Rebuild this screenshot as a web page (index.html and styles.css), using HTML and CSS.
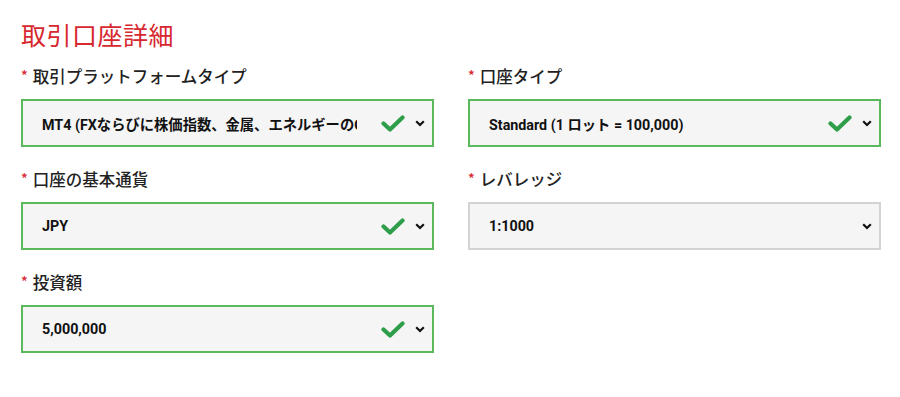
FILE: index.html
```html
<!DOCTYPE html>
<html lang="ja">
<head>
<meta charset="utf-8">
<link rel="stylesheet" href="styles.css">
</head>
<body>
<div class="page">
  <h1 class="title">取引口座詳細</h1>
  <div class="grid">
    <div class="field">
      <div class="label"><span class="req">*</span>取引プラットフォームタイプ</div>
      <div class="select valid">
        <span class="value">MT4 (FXならびに株価指数、金属、エネルギーのCFD)</span>
        <svg class="check" width="24" height="17" viewBox="0 0 24 17"><path d="M2.5 8.5 L9 14.5 L21.5 2.5" fill="none" stroke="#2e9e4a" stroke-width="4.2" stroke-linecap="round" stroke-linejoin="round"/></svg>
        <svg class="chev" width="10" height="7" viewBox="0 0 10 7"><polyline points="1.2,1.2 5,5 8.8,1.2" fill="none" stroke="#111" stroke-width="2.2"/></svg>
      </div>
    </div>
    <div class="field">
      <div class="label"><span class="req">*</span>口座タイプ</div>
      <div class="select valid">
        <span class="value">Standard (1 ロット = 100,000)</span>
        <svg class="check" width="24" height="17" viewBox="0 0 24 17"><path d="M2.5 8.5 L9 14.5 L21.5 2.5" fill="none" stroke="#2e9e4a" stroke-width="4.2" stroke-linecap="round" stroke-linejoin="round"/></svg>
        <svg class="chev" width="10" height="7" viewBox="0 0 10 7"><polyline points="1.2,1.2 5,5 8.8,1.2" fill="none" stroke="#111" stroke-width="2.2"/></svg>
      </div>
    </div>
    <div class="field">
      <div class="label"><span class="req">*</span>口座の基本通貨</div>
      <div class="select valid">
        <span class="value">JPY</span>
        <svg class="check" width="24" height="17" viewBox="0 0 24 17"><path d="M2.5 8.5 L9 14.5 L21.5 2.5" fill="none" stroke="#2e9e4a" stroke-width="4.2" stroke-linecap="round" stroke-linejoin="round"/></svg>
        <svg class="chev" width="10" height="7" viewBox="0 0 10 7"><polyline points="1.2,1.2 5,5 8.8,1.2" fill="none" stroke="#111" stroke-width="2.2"/></svg>
      </div>
    </div>
    <div class="field">
      <div class="label"><span class="req">*</span>レバレッジ</div>
      <div class="select">
        <span class="value">1:1000</span>
        <svg class="chev" width="10" height="7" viewBox="0 0 10 7"><polyline points="1.2,1.2 5,5 8.8,1.2" fill="none" stroke="#111" stroke-width="2.2"/></svg>
      </div>
    </div>
    <div class="field">
      <div class="label"><span class="req">*</span>投資額</div>
      <div class="select valid">
        <span class="value">5,000,000</span>
        <svg class="check" width="24" height="17" viewBox="0 0 24 17"><path d="M2.5 8.5 L9 14.5 L21.5 2.5" fill="none" stroke="#2e9e4a" stroke-width="4.2" stroke-linecap="round" stroke-linejoin="round"/></svg>
        <svg class="chev" width="10" height="7" viewBox="0 0 10 7"><polyline points="1.2,1.2 5,5 8.8,1.2" fill="none" stroke="#111" stroke-width="2.2"/></svg>
      </div>
    </div>
  </div>
</div>
</body>
</html>
```
FILE: styles.css
```css
html, body {
  margin: 0;
  padding: 0;
  background: #fff;
}
body {
  font-family: Roboto, "Noto Sans CJK JP", "Liberation Sans", sans-serif;
  color: #1a1a1a;
}
.page {
  padding: 18px 20px 0 21px;
}
.title {
  margin: 0;
  font-family: "Noto Sans CJK JP", sans-serif;
  font-weight: 400;
  font-size: 25px;
  line-height: 32px;
  color: #d7282f;
  letter-spacing: 0.5px;
}
.grid {
  display: grid;
  grid-template-columns: 413px 413px;
  column-gap: 34px;
  row-gap: 20px;
  margin-top: 14px;
}
.label {
  font-family: "Noto Sans CJK JP", sans-serif;
  font-weight: 500;
  font-size: 16.5px;
  line-height: 24px;
  color: #222;
  display: flex;
  align-items: center;
}
.req {
  color: #d7282f;
  font-size: 14px;
  margin-right: 5px;
  margin-top: -2px;
}
.select {
  margin-top: 11px;
  height: 44px;
  border: 2px solid #d3d3d3;
  background: #f5f5f5;
  display: flex;
  align-items: center;
  padding: 0 7px 0 19px;
}
.select.valid {
  border-color: #5cb85c;
}
.value {
  flex: 1;
  min-width: 0;
  white-space: nowrap;
  overflow: hidden;
  font-family: Roboto, "Noto Sans CJK JP", sans-serif;
  font-weight: 700;
  font-size: 14.3px;
  color: #111;
  margin-right: 24px;
}
.check {
  flex: none;
  margin-right: 10px;
  margin-top: 1px;
}
.chev {
  flex: none;
}
```
